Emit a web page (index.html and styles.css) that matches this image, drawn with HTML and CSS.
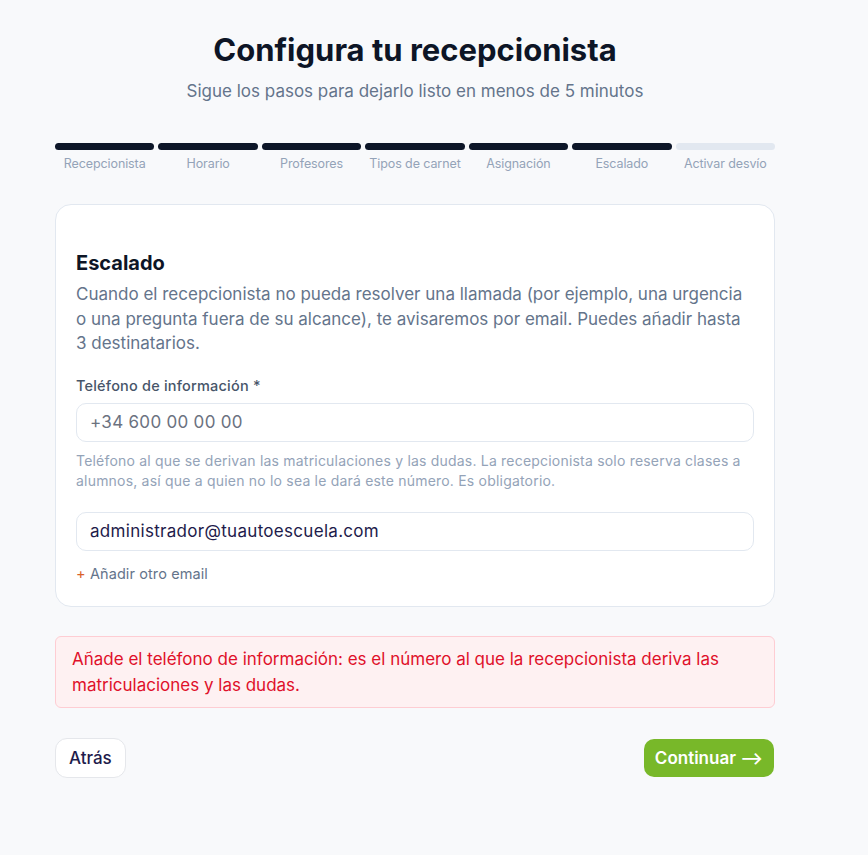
FILE: index.html
```html
<!DOCTYPE html>
<html lang="es">
<head>
<meta charset="utf-8">
<title>Configura tu recepcionista</title>
<link rel="stylesheet" href="styles.css">
</head>
<body>
<main class="page">
  <header class="head">
    <h1 class="title">Configura tu recepcionista</h1>
    <p class="subtitle">Sigue los pasos para dejarlo listo en menos de 5 minutos</p>
  </header>

  <ol class="steps">
    <li class="step done"><span class="bar"></span><span class="step-label">Recepcionista</span></li>
    <li class="step done"><span class="bar"></span><span class="step-label">Horario</span></li>
    <li class="step done"><span class="bar"></span><span class="step-label">Profesores</span></li>
    <li class="step done"><span class="bar"></span><span class="step-label">Tipos de carnet</span></li>
    <li class="step done"><span class="bar"></span><span class="step-label">Asignación</span></li>
    <li class="step done"><span class="bar"></span><span class="step-label">Escalado</span></li>
    <li class="step"><span class="bar"></span><span class="step-label">Activar desvío</span></li>
  </ol>

  <section class="card">
    <h2 class="card-title">Escalado</h2>
    <p class="card-desc">Cuando el recepcionista no pueda resolver una llamada (por ejemplo, una urgencia o una pregunta fuera de su alcance), te avisaremos por email. Puedes añadir hasta 3 destinatarios.</p>

    <div class="field">
      <label class="field-label" for="tel">Teléfono de información *</label>
      <input class="input" id="tel" type="text" placeholder="+34 600 00 00 00">
      <p class="help">Teléfono al que se derivan las matriculaciones y las dudas. La recepcionista solo reserva clases a alumnos, así que a quien no lo sea le dará este número. Es obligatorio.</p>
    </div>

    <div class="field emails">
      <input class="input" type="text" value="administrador@tuautoescuela.com">
      <button class="add-link" type="button"><span class="plus">+</span> Añadir otro email</button>
    </div>
  </section>

  <div class="alert">Añade el teléfono de información: es el número al que la recepcionista deriva las matriculaciones y las dudas.</div>

  <div class="actions">
    <button class="btn btn-back" type="button">Atrás</button>
    <button class="btn btn-next" type="button">Continuar ⟶</button>
  </div>
</main>
</body>
</html>
```

FILE: styles.css
```css
* { box-sizing: border-box; }

html, body {
  margin: 0;
  padding: 0;
  background: #f8f9fb;
}

body {
  font-family: Inter, "Noto Sans", "DejaVu Sans", sans-serif;
  color: #0f172a;
}

.page {
  width: 720px;
  margin-left: 55px;
  padding-top: 30px;
}

.head {
  text-align: center;
}

.title {
  margin: 0;
  font-size: 31px;
  line-height: 40px;
  font-weight: 700;
  letter-spacing: 0;
  color: #0d1526;
}

.subtitle {
  margin: 10px 0 0;
  font-size: 17px;
  line-height: 22px;
  color: #64748b;
  letter-spacing: 0;
}

.steps {
  list-style: none;
  margin: 41px 0 0;
  padding: 0;
  display: grid;
  grid-template-columns: repeat(7, 1fr);
  gap: 4px;
}

.step {
  display: flex;
  flex-direction: column;
  align-items: center;
  gap: 6px;
}

.bar {
  display: block;
  width: 100%;
  height: 7px;
  border-radius: 4px;
  background: #e2e8f0;
}

.step.done .bar {
  background: #0d1628;
}

.step-label {
  font-size: 12.5px;
  line-height: 16px;
  color: #94a3b8;
  letter-spacing: -0.1px;
}

.card {
  margin-top: 32px;
  background: #ffffff;
  border: 1px solid #e2e8f0;
  border-radius: 16px;
  padding: 45px 20px 22px;
}

.card-title {
  margin: 0;
  font-size: 20px;
  line-height: 26px;
  font-weight: 700;
  color: #0d1526;
  letter-spacing: 0;
}

.card-desc {
  margin: 6px 0 0;
  font-size: 17px;
  line-height: 24.5px;
  color: #64748b;
  letter-spacing: 0;
}

.field {
  margin-top: 20px;
}

.field-label {
  display: block;
  font-size: 14.5px;
  line-height: 20px;
  font-weight: 500;
  color: #475569;
  letter-spacing: 0.2px;
}

.input {
  display: block;
  width: 100%;
  height: 39px;
  margin-top: 7px;
  padding: 0 13px;
  border: 1px solid #e2e8f0;
  border-radius: 10px;
  background: #ffffff;
  font-family: inherit;
  font-size: 17px;
  color: #1e1b4b;
  outline: none;
  letter-spacing: 0.3px;
}

.input::placeholder {
  color: #6b7280;
}

.help {
  margin: 9px 0 0;
  font-size: 14px;
  line-height: 20px;
  color: #94a3b8;
  letter-spacing: 0.2px;
}

.emails {
  margin-top: 21px;
}

.emails .input {
  margin-top: 0;
}

.add-link {
  display: block;
  margin-top: 13px;
  padding: 0;
  border: 0;
  background: none;
  font-family: inherit;
  font-size: 14.5px;
  line-height: 20px;
  color: #64748b;
  cursor: pointer;
  letter-spacing: 0.1px;
}

.plus {
  color: #d9622b;
}

.alert {
  margin-top: 29px;
  padding: 9px 16px;
  background: #fef1f2;
  border: 1px solid #fecdd3;
  border-radius: 6px;
  color: #e0102a;
  font-size: 17px;
  line-height: 26px;
  letter-spacing: 0;
}

.actions {
  margin-top: 30px;
  display: flex;
  justify-content: space-between;
  align-items: center;
}

.btn {
  font-family: inherit;
  font-size: 17px;
  line-height: 22px;
  border-radius: 12px;
  cursor: pointer;
  letter-spacing: 0;
}

.btn-back {
  height: 40px;
  padding: 0 13px;
  background: #ffffff;
  border: 1px solid #e5e7eb;
  color: #1e1b4b;
  font-weight: 500;
}

.btn-next {
  height: 38px;
  padding: 0 11px;
  margin-right: 1px;
  background: #78b829;
  border: 0;
  border-radius: 10px;
  color: #ffffff;
  font-weight: 600;
}
```
